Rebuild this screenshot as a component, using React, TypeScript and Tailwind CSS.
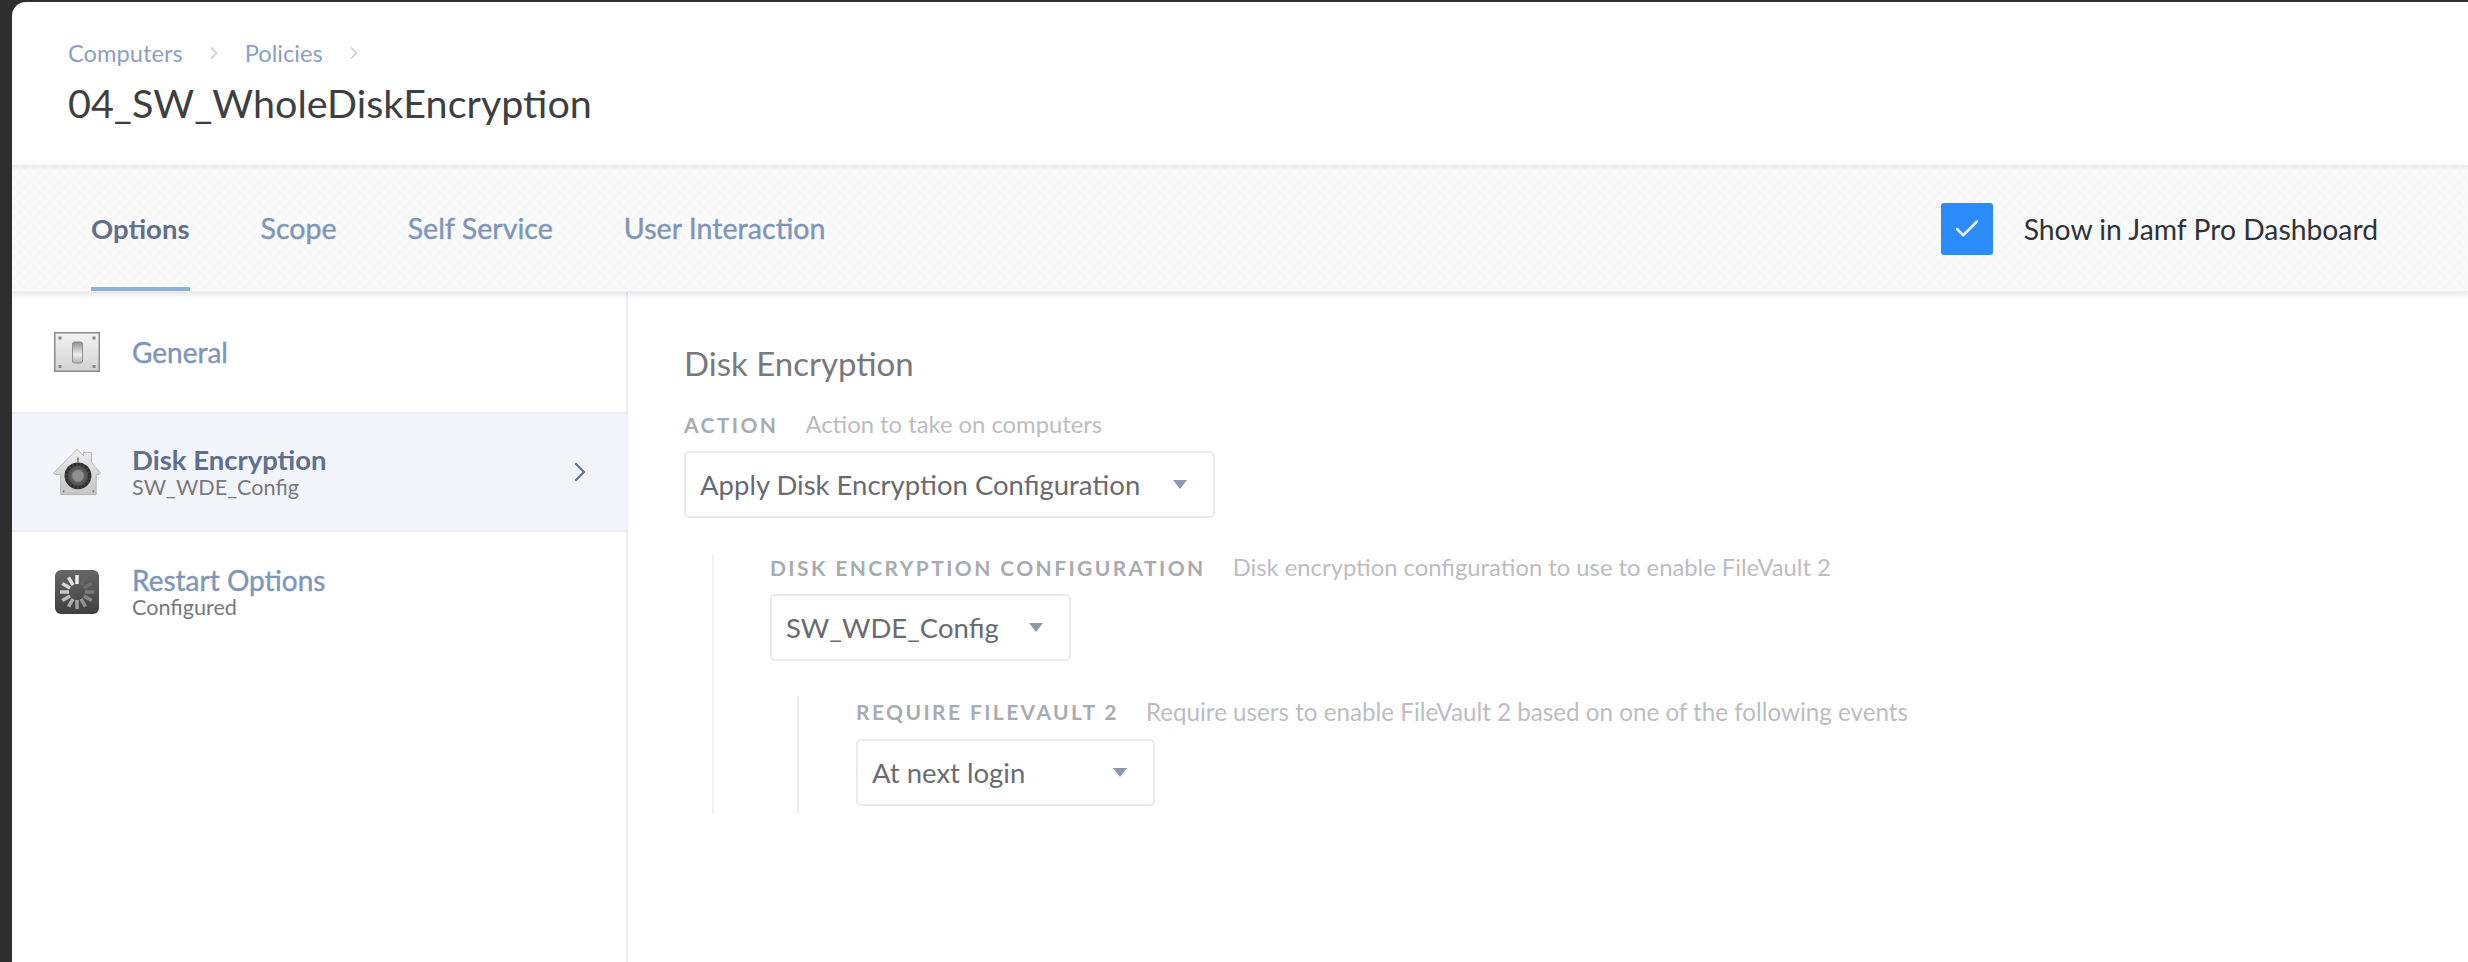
import React from 'react';
import { ChevronRight, Check } from 'lucide-react';

const tabs = ['Options', 'Scope', 'Self Service', 'User Interaction'];

const SwitchIcon = () => (
  <svg width="46" height="40" viewBox="0 0 46 40" className="block">
    <defs>
      <linearGradient id="plate" x1="0" y1="0" x2="0" y2="1">
        <stop offset="0" stopColor="#f4f4f4" />
        <stop offset="1" stopColor="#d2d2d2" />
      </linearGradient>
      <linearGradient id="toggle" x1="0" y1="0" x2="0" y2="1">
        <stop offset="0" stopColor="#8d8d8d" />
        <stop offset="0.6" stopColor="#f0f0f0" />
        <stop offset="1" stopColor="#b0b0b0" />
      </linearGradient>
    </defs>
    <rect x="0.75" y="0.75" width="44.5" height="38.5" fill="url(#plate)" stroke="#8a8a8a" strokeWidth="1.5" />
    <rect x="4.5" y="4.5" width="3" height="3" fill="#888" />
    <rect x="38.5" y="4.5" width="3" height="3" fill="#888" />
    <rect x="4.5" y="33" width="3" height="3" fill="#888" />
    <rect x="38.5" y="33" width="3" height="3" fill="#888" />
    <rect x="18.5" y="10" width="10" height="21" rx="2" fill="url(#toggle)" stroke="#8c8c8c" />
  </svg>
);

const VaultIcon = () => (
  <svg width="50" height="48" viewBox="0 0 50 48" className="block">
    <defs>
      <linearGradient id="house" x1="0" y1="0" x2="0" y2="1">
        <stop offset="0" stopColor="#eeeeee" />
        <stop offset="1" stopColor="#c6c6c6" />
      </linearGradient>
      <radialGradient id="dial">
        <stop offset="0" stopColor="#a8a8a8" />
        <stop offset="0.5" stopColor="#606060" />
        <stop offset="1" stopColor="#333" />
      </radialGradient>
    </defs>
    <path
      d="M25 0.5 L32 7 V3.5 H40 V14 L49.5 25 L48 26.5 H45 V47.5 H8 V26.5 H2 L0.5 25 Z"
      fill="url(#house)"
      stroke="#b4b4b4"
      strokeLinejoin="round"
    />
    <circle cx="26" cy="28" r="14" fill="url(#dial)" />
    <circle cx="26" cy="28" r="12" fill="none" stroke="#2a2a2a" strokeWidth="3" strokeDasharray="2 2" />
    <circle cx="26" cy="28" r="6" fill="#8f8f8f" />
    <path d="M25 9h2v5h-2z" fill="#8a8a8a" />
    <circle cx="11" cy="44" r="1" fill="#777" />
    <circle cx="42" cy="44" r="1" fill="#777" />
  </svg>
);

const SpinnerIcon = () => (
  <svg width="44" height="44" viewBox="0 0 44 44" className="block">
    <defs>
      <linearGradient id="tile" x1="0" y1="0" x2="0" y2="1">
        <stop offset="0" stopColor="#666" />
        <stop offset="1" stopColor="#3f3f3f" />
      </linearGradient>
    </defs>
    <rect width="44" height="44" rx="6" fill="url(#tile)" />
    {[
      [0, '#ededed'],
      [-30, '#e2e2e2'],
      [-60, '#d6d6d6'],
      [-90, '#cacaca'],
      [-120, '#bcbcbc'],
      [-150, '#aeaeae'],
      [180, '#a0a0a0'],
      [150, '#939393'],
      [120, '#868686'],
      [90, '#7a7a7a'],
      [60, '#6f6f6f'],
      [30, '#656565'],
    ].map(([angle, color]) => (
      <rect
        key={angle as number}
        x="20.25"
        y="5"
        width="3.5"
        height="9"
        fill={color as string}
        transform={`rotate(${angle} 22 22)`}
      />
    ))}
  </svg>
);

const Caret = () => (
  <svg width="14" height="9" viewBox="0 0 14 9" className="block shrink-0">
    <path d="M0 0h14L7 9z" fill="#8e98ad" />
  </svg>
);

const Select = ({ value, width }: { value: string; width: string }) => (
  <div
    className={`flex h-[67px] items-center justify-between rounded-[5px] border-2 border-[#e8eaef] bg-white pl-[14px] pr-[26px] text-[27.5px] text-[#696b6f] ${width}`}
  >
    <span>{value}</span>
    <Caret />
  </div>
);

const FieldLabel = ({ label, hint, hintSize }: { label: string; hint: string; hintSize?: string }) => (
  <div className="flex h-[26px] items-center whitespace-nowrap">
    <span className="text-[21px] font-bold tracking-[2.4px] text-[#a9abaf]">{label}</span>
    <span className={`ml-[27px] text-[#bcbdc0] ${hintSize ?? 'text-[23.8px]'}`}>{hint}</span>
  </div>
);

const SideItem = ({
  icon,
  title,
  sub,
  active,
}: {
  icon: React.ReactNode;
  title: string;
  sub?: string;
  active?: boolean;
}) => (
  <div
    className={`flex h-[120px] items-center ${active ? 'border-y-2 border-[#e9ecf3] bg-[#f3f5fa]' : ''}`}
  >
    <div className="ml-[41px] flex w-[48px] shrink-0 justify-center">{icon}</div>
    <div className="ml-[31px] flex-1">
      <div
        className={`leading-[30px] ${active ? 'text-[27.5px] font-bold text-[#5f6f8c]' : 'text-[28px] text-[#7f95b9] [-webkit-text-stroke:0.4px]'}`}
      >
        {title}
      </div>
      {sub && <div className="text-[21.6px] leading-[24px] text-[#77797d]">{sub}</div>}
    </div>
    {active && <ChevronRight className="mr-[30px] text-[#5f6f8c]" size={32} strokeWidth={1.6} />}
  </div>
);

export default function App() {
  return (
    <div className="h-[962px] w-[2468px] overflow-hidden bg-[#2e2e2e] pl-[12px] pt-[2px] font-['Lato',sans-serif]">
      <div className="flex h-[960px] flex-col overflow-hidden rounded-tl-[14px] bg-white">
        <header className="h-[163px] pl-[56px] pt-[36px]">
          <div className="flex items-center text-[23.7px] leading-[30px] text-[#8ba0c4]">
            <span>Computers</span>
            <ChevronRight className="mx-[21px] text-[#c5cedd]" size={20} />
            <span>Policies</span>
            <ChevronRight className="mx-[21px] text-[#c5cedd]" size={20} />
          </div>
          <h1 className="mt-[12px] text-[39.5px] leading-[46px] text-[#3d3f42]">04_SW_WholeDiskEncryption</h1>
        </header>

        <div className="z-10 flex h-[127px] items-stretch justify-between border-b border-[#eceef1] bg-[#fafafa] bg-[radial-gradient(circle_at_2.5px_2.5px,#f7f7f7_2px,transparent_3px),radial-gradient(circle_at_7.5px_7.5px,#f7f7f7_2px,transparent_3px)] bg-[length:10px_10px] pl-[79px] pr-[90px] shadow-[0_2px_6px_rgba(0,0,0,0.12),inset_0_5px_5px_-3px_rgba(0,0,0,0.08)]">
          <nav className="flex gap-[71px]">
            {tabs.map((tab, i) => (
              <div
                key={tab}
                className={`flex items-center border-b-[4px] pt-[5px] ${
                  i === 0
                    ? 'border-[#8fb0d8] text-[27.5px] font-bold text-[#5f6f8c]'
                    : 'border-transparent text-[28.6px] text-[#7f95b9] [-webkit-text-stroke:0.4px]'
                }`}
              >
                {tab}
              </div>
            ))}
          </nav>
          <div className="flex items-center pt-[2px]">
            <div className="flex h-[52px] w-[52px] items-center justify-center rounded-[3px] bg-[#2b8bfb]">
              <Check className="text-[#e8f3ff]" size={30} strokeWidth={2} />
            </div>
            <span className="ml-[31px] text-[28.3px] leading-[34px] text-[#2f3236]">Show in Jamf Pro Dashboard</span>
          </div>
        </div>

        <div className="flex flex-1">
          <aside className="w-[616px] shrink-0 border-r-2 border-[#e9ecf3]">
            <SideItem icon={<SwitchIcon />} title="General" />
            <SideItem icon={<VaultIcon />} title="Disk Encryption" sub="SW_WDE_Config" active />
            <SideItem icon={<SpinnerIcon />} title="Restart Options" sub="Configured" />
          </aside>

          <main className="flex-1 pl-[56px] pt-[51px]">
            <h2 className="text-[33px] leading-[40px] text-[#77797d]">Disk Encryption</h2>
            <div className="mt-[29px]">
              <FieldLabel label="ACTION" hint="Action to take on computers" />
              <div className="mt-[13px]">
                <Select value="Apply Disk Encryption Configuration" width="w-[531px]" />
              </div>
            </div>
            <div className="ml-[28px] mt-[37px] border-l-2 border-[#eff0f3] pl-[56px]">
              <FieldLabel label="DISK ENCRYPTION CONFIGURATION" hint="Disk encryption configuration to use to enable FileVault 2" />
              <div className="mt-[13px]">
                <Select value="SW_WDE_Config" width="w-[301px]" />
              </div>
              <div className="ml-[27px] mt-[35px] border-l-2 border-[#eff0f3] pl-[57px] pt-[3px]">
                <FieldLabel
                  label="REQUIRE FILEVAULT 2"
                  hint="Require users to enable FileVault 2 based on one of the following events"
                  hintSize="text-[24.2px]"
                />
                <div className="mt-[14px] pb-[8px]">
                  <Select value="At next login" width="w-[299px]" />
                </div>
              </div>
            </div>
          </main>
        </div>
      </div>
    </div>
  );
}
